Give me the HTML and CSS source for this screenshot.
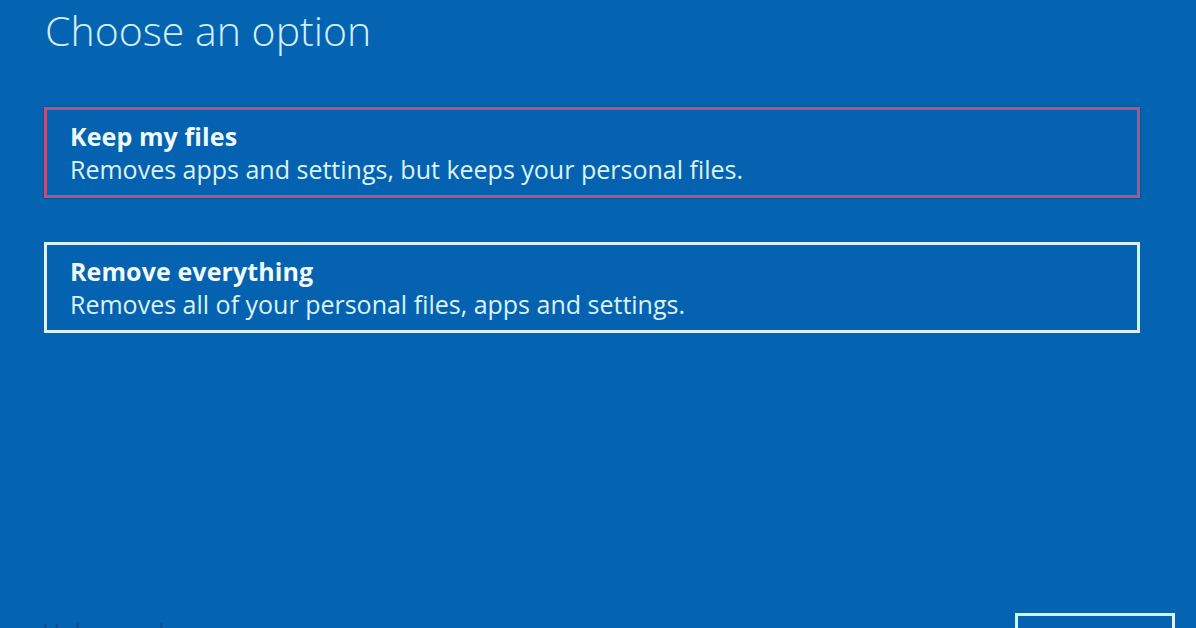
FILE: index.html
```html
<!DOCTYPE html>
<html lang="en">
<head>
<meta charset="utf-8">
<title>Choose an option</title>
<link rel="stylesheet" href="styles.css">
</head>
<body>
<main class="page">
  <h1 class="title">Choose an option</h1>
  <div class="options">
    <div class="option option-selected">
      <div class="option-name">Keep my files</div>
      <div class="option-desc">Removes apps and settings, but keeps your personal files.</div>
    </div>
    <div class="option">
      <div class="option-name">Remove everything</div>
      <div class="option-desc">Removes all of your personal files, apps and settings.</div>
    </div>
  </div>
</main>
<footer class="footer">
  <a class="help-link" href="#">Help me choose</a>
  <button class="cancel-btn" type="button">Cancel</button>
</footer>
</body>
</html>
```

FILE: styles.css
```css
html, body {
  margin: 0;
  padding: 0;
}

body {
  width: 1196px;
  height: 628px;
  overflow: hidden;
  background: #0564b2;
  color: #e4f6ff;
  font-family: "Open Sans", "Noto Sans", sans-serif;
}

.page {
  padding: 10px 56px 0 44px;
}

.title {
  margin: 0 0 0 1px;
  font-size: 41px;
  line-height: 41px;
  font-weight: 300;
  color: #d2f0ff;
}

.options {
  margin-top: 56px;
  display: flex;
  flex-direction: column;
  gap: 44px;
}

.option {
  border: 3px solid #d6f3ff;
  padding: 10px 20px 9px 23px;
  background: #0562b0;
}

.option-selected {
  border-color: #b3557f;
  box-shadow: 0 0 2px rgba(10, 30, 80, 0.6);
}

.option-name {
  font-size: 25px;
  line-height: 33px;
  font-weight: 700;
  color: #f0fbff;
  letter-spacing: 0.1px;
}

.option-desc {
  font-size: 25px;
  line-height: 33px;
  font-weight: 400;
  color: #dcf3ff;
}

.footer {
  margin-top: 280px;
  padding: 0 21px 0 42px;
  display: flex;
  justify-content: space-between;
  align-items: flex-start;
}

.help-link {
  margin-top: 3px;
  font-size: 25px;
  line-height: 33px;
  color: #0d4d8f;
  text-decoration: none;
}

.cancel-btn {
  width: 160px;
  height: 56px;
  border: 3px solid #d6f3ff;
  background: #0562b0;
  color: #e4f6ff;
  font-family: inherit;
  font-size: 25px;
}
```
